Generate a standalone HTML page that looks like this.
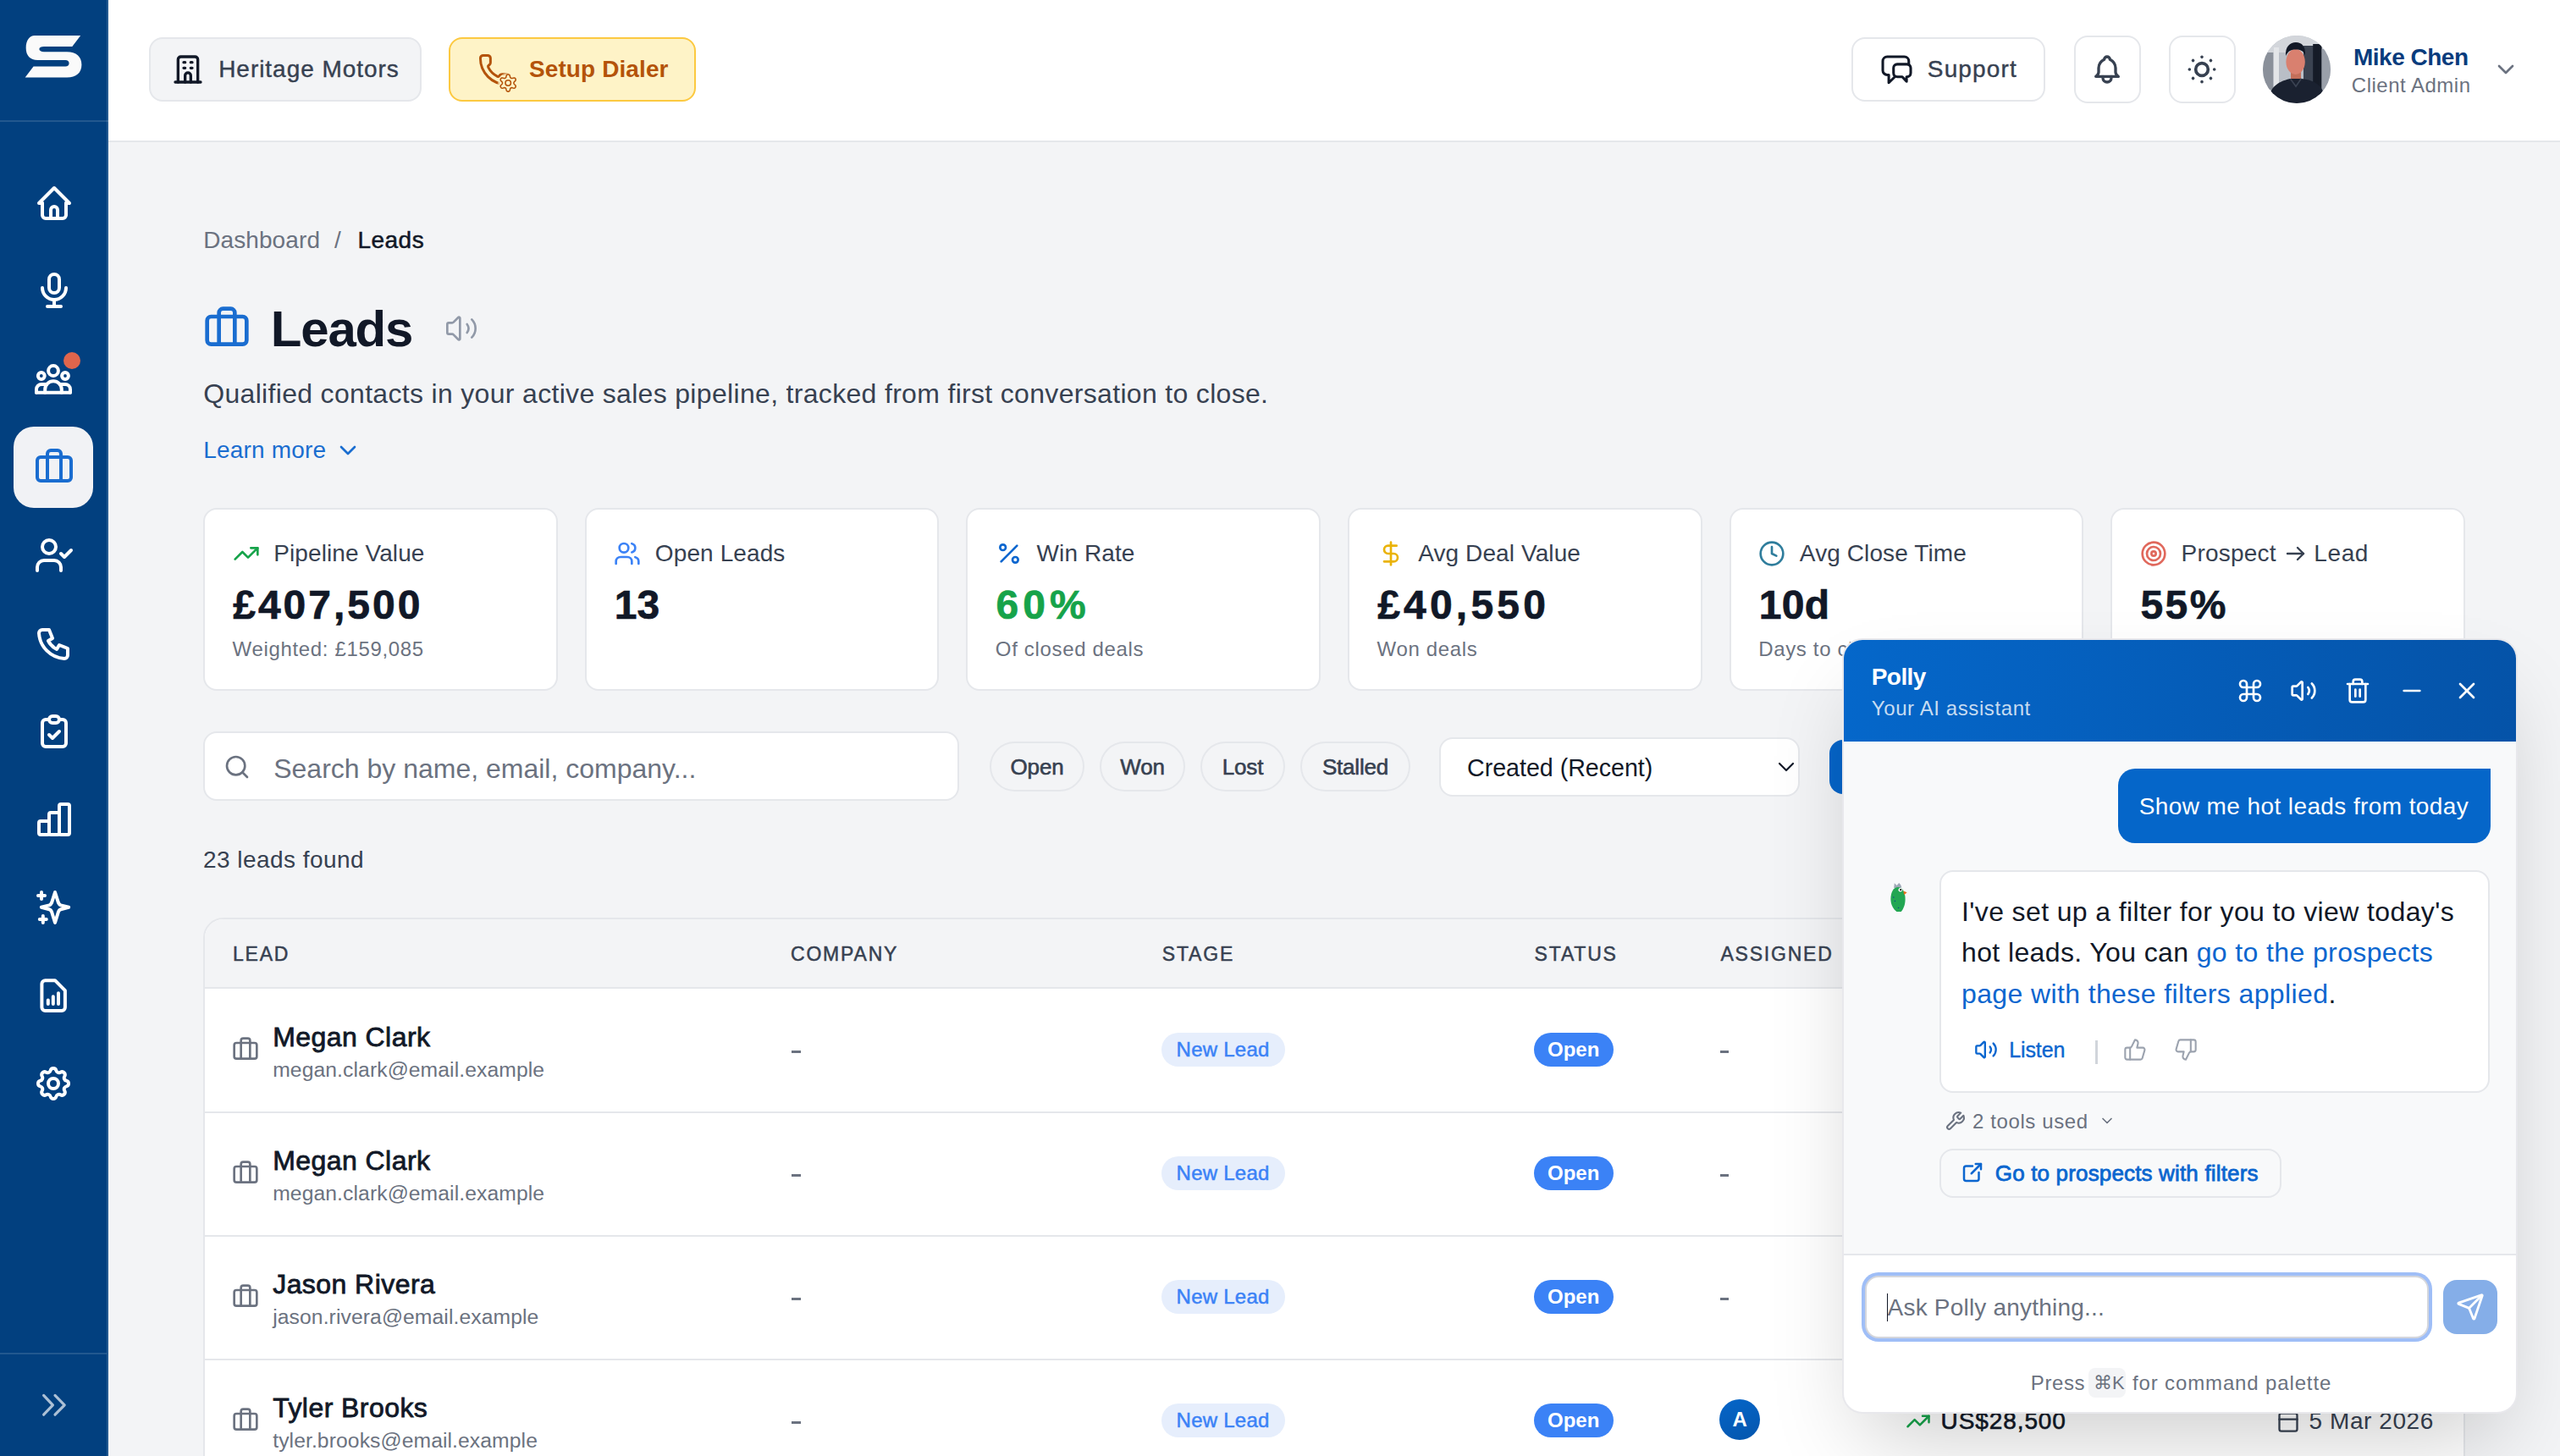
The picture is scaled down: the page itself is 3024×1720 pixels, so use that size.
<!DOCTYPE html>
<html><head><meta charset="utf-8"><title>Leads</title>
<style>
html,body{margin:0;padding:0;}
body{width:1512px;height:860px;overflow:hidden;position:relative;font-family:"Liberation Sans",sans-serif;background:#f3f4f6;}
@media (min-width:2200px){body{zoom:2;}}
.t{position:absolute;white-space:nowrap;}
.b{position:absolute;}
.ic{position:absolute;overflow:visible;}
</style></head><body>
<div class="b" style="left:0.00px;top:0.00px;width:64.00px;height:860.00px;background:#02407f;"></div>
<div class="b" style="left:63.20px;top:0.00px;width:0.60px;height:860.00px;background:rgba(255,255,255,0.14);"></div>
<div class="b" style="left:0.00px;top:71.00px;width:64.00px;height:1.00px;background:rgba(255,255,255,0.13);"></div>
<div class="b" style="left:0.00px;top:798.90px;width:63.20px;height:1.00px;background:rgba(255,255,255,0.13);"></div>
<svg class="ic" style="left:14px;top:20px;width:36px;height:27px" viewBox="0 0 36 27"><path fill="#fafafa" d="M6.4 1.01H33.6L28.65 7.5H11.96C10.3 7.5 9.18 8 9.18 9.05C9.18 10.1 10.3 10.6 11.96 10.6H25.56C31 10.6 34.2 13.5 34.2 18.2C34.2 22.9 31 25.74 25.56 25.74H0.83L5.78 19.25H24.6C26 19.25 26.8 18.6 26.8 17.4C26.8 16.2 26 15.54 24.6 15.54H8.25C3.8 15.54 1.33 12.9 1.33 8.3C1.33 3.8 3.5 1.01 6.4 1.01Z"/></svg>
<svg class="ic" style="left:20.00px;top:108.00px;width:24px;height:24px;" viewBox="0 0 24 24" fill="none" stroke="#ffffff" stroke-width="2" stroke-linecap="round" stroke-linejoin="round"><path d="M5 12H3l9-9 9 9h-2"/><path d="M5 12v7a2 2 0 0 0 2 2h10a2 2 0 0 0 2-2v-7"/><path d="M10 21v-5a2 2 0 0 1 4 0v5"/></svg>
<svg class="ic" style="left:20.00px;top:160.00px;width:24px;height:24px;" viewBox="0 0 24 24" fill="none" stroke="#ffffff" stroke-width="2" stroke-linecap="round" stroke-linejoin="round"><path d="M9 5a3 3 0 0 1 6 0v5a3 3 0 0 1-6 0z"/><path d="M5 10a7 7 0 0 0 14 0"/><path d="M8 21h8"/><path d="M12 17v4"/></svg>
<svg class="ic" style="left:20.00px;top:212.00px;width:24px;height:24px;" viewBox="0 0 24 24" fill="none" stroke="#ffffff" stroke-width="2" stroke-linecap="round" stroke-linejoin="round"><circle cx="11.5" cy="7" r="2.95"/><circle cx="4.4" cy="10" r="1.95"/><circle cx="18.5" cy="10" r="1.95"/><path d="M1.5 19.9H21.5"/><path d="M6.6 19.9V18A4.9 4.9 0 0 1 16.4 18V19.9"/><path d="M1.5 19.9V18A3 3 0 0 1 4.5 15H7.6"/><path d="M21.5 19.9V18A3 3 0 0 0 18.5 15H15.4"/></svg>
<div class="b" style="left:8.00px;top:252.00px;width:47.00px;height:48.00px;background:#f1f2f5;border-radius:12px;"></div>
<svg class="ic" style="left:20.00px;top:264.00px;width:24px;height:24px;" viewBox="0 0 24 24" fill="none" stroke="#1a6dd0" stroke-width="2" stroke-linecap="round" stroke-linejoin="round"><path d="M16 20V4a2 2 0 0 0-2-2h-4a2 2 0 0 0-2 2v16"/><rect width="20" height="14" x="2" y="6" rx="2"/></svg>
<svg class="ic" style="left:20.00px;top:316.00px;width:24px;height:24px;" viewBox="0 0 24 24" fill="none" stroke="#ffffff" stroke-width="2" stroke-linecap="round" stroke-linejoin="round"><path d="m16 11 2 2 4-4"/><path d="M16 21v-2a4 4 0 0 0-4-4H6a4 4 0 0 0-4 4v2"/><circle cx="9" cy="7" r="4"/></svg>
<svg class="ic" style="left:20.00px;top:368.00px;width:24px;height:24px;" viewBox="0 0 24 24" fill="none" stroke="#ffffff" stroke-width="2" stroke-linecap="round" stroke-linejoin="round"><path d="M5 4h4l2 5-2.5 1.5a11 11 0 0 0 5 5L15 13l5 2v4a2 2 0 0 1-2 2A16 16 0 0 1 3 6a2 2 0 0 1 2-2"/></svg>
<svg class="ic" style="left:20.00px;top:420.00px;width:24px;height:24px;" viewBox="0 0 24 24" fill="none" stroke="#ffffff" stroke-width="2" stroke-linecap="round" stroke-linejoin="round"><path d="M9 5H7a2 2 0 0 0-2 2v12a2 2 0 0 0 2 2h10a2 2 0 0 0 2-2V7a2 2 0 0 0-2-2h-2"/><rect x="9" y="3" width="6" height="4" rx="2"/><path d="m9 14 2 2 4-4"/></svg>
<svg class="ic" style="left:20.00px;top:472.00px;width:24px;height:24px;" viewBox="0 0 24 24" fill="none" stroke="#ffffff" stroke-width="2" stroke-linecap="round" stroke-linejoin="round"><rect x="3" y="13" width="6" height="8" rx="1"/><rect x="9" y="8" width="6" height="13" rx="1"/><rect x="15" y="3" width="6" height="18" rx="1"/></svg>
<svg class="ic" style="left:20.00px;top:524.00px;width:24px;height:24px;" viewBox="0 0 24 24" fill="none" stroke="#ffffff" stroke-width="2" stroke-linecap="round" stroke-linejoin="round"><path d="M12.5 3L14.5 9.3Q14.9 10.3 15.9 10.7L20.6 11.9L15.9 13.1Q14.9 13.5 14.5 14.5L12.5 21L10.5 14.5Q10.1 13.5 9.1 13.1L4.4 11.9L9.1 10.7Q10.1 10.3 10.5 9.3Z"/><path d="M4.5 3v4M2.5 5h4"/><path d="M5.4 17v4M3.4 19h4"/></svg>
<svg class="ic" style="left:20.00px;top:576.00px;width:24px;height:24px;" viewBox="0 0 24 24" fill="none" stroke="#ffffff" stroke-width="2" stroke-linecap="round" stroke-linejoin="round"><path d="M4.7 5.1a2 2 0 0 1 2-2H12.5L18.45 9.1V19a2 2 0 0 1-2 2H6.7a2 2 0 0 1-2-2z"/><path d="M8.4 17v-2.3M11.4 17v-4.4M14.5 17v-6.4"/></svg>
<svg class="ic" style="left:19.40px;top:628.00px;width:24px;height:24px;" viewBox="0 0 24 24" fill="none" stroke="#ffffff" stroke-width="2" stroke-linecap="round" stroke-linejoin="round"><path d="M10.325 4.317c.426-1.756 2.924-1.756 3.35 0a1.724 1.724 0 0 0 2.573 1.066c1.543-.94 3.31.826 2.37 2.37a1.724 1.724 0 0 0 1.065 2.572c1.756.426 1.756 2.924 0 3.35a1.724 1.724 0 0 0-1.066 2.573c.94 1.543-.826 3.31-2.37 2.37a1.724 1.724 0 0 0-2.572 1.065c-.426 1.756-2.924 1.756-3.35 0a1.724 1.724 0 0 0-2.573-1.066c-1.543.94-3.31-.826-2.37-2.37a1.724 1.724 0 0 0-1.065-2.572c-1.756-.426-1.756-2.924 0-3.35a1.724 1.724 0 0 0 1.066-2.573c-.94-1.543.826-3.31 2.37-2.37 1 .608 2.296.07 2.572-1.065z"/><circle cx="12" cy="12" r="3"/></svg>
<div class="b" style="left:37.40px;top:207.80px;width:10.00px;height:10.00px;background:#e0654c;border-radius:50%;"></div>
<svg class="ic" style="left:19.50px;top:818.00px;width:24px;height:24px;" viewBox="0 0 24 24" fill="none" stroke="rgba(230,235,242,0.75)" stroke-width="1.6" stroke-linecap="round" stroke-linejoin="round"><path d="M6.3 6.2l5.4 5.7-5.4 5.7"/><path d="M13 6.2l5.6 5.7-5.6 5.7"/></svg>
<div class="b" style="left:64.00px;top:0.00px;width:1448.00px;height:83.00px;background:#ffffff;"></div>
<div class="b" style="left:64.00px;top:83.00px;width:1448.00px;height:1.00px;background:#e5e7eb;"></div>
<div class="b" style="left:88.00px;top:22.00px;width:161.00px;height:38.00px;background:#f3f4f6;border:1px solid #e5e7eb;border-radius:8px;box-sizing:border-box;"></div>
<svg class="ic" style="left:101.10px;top:31.00px;width:20px;height:20px;" viewBox="0 0 24 24" fill="none" stroke="#111827" stroke-width="2" stroke-linecap="round" stroke-linejoin="round"><path d="M3 21h18"/><path d="M5 21V5a2 2 0 0 1 2-2h10a2 2 0 0 1 2 2v16"/><path d="M9 7h1M14 7h1M9 11h1M14 11h1"/><path d="M10 21v-4.7a2 2 0 0 1 4 0v4.7"/></svg>
<div class="t" style="left:129.10px;top:34.15px;font-size:14px;line-height:14px;color:#374151;font-weight:400;letter-spacing:0.48px;-webkit-text-stroke:0.2px #374151;">Heritage Motors</div>
<div class="b" style="left:265.00px;top:22.00px;width:146.00px;height:38.00px;background:#fef3c7;border:1px solid #fcc940;border-radius:8px;box-sizing:border-box;"></div>
<svg class="ic" style="left:281.9px;top:31px;width:20.5px;height:20.5px" viewBox="0 0 24 24" fill="none" stroke="#b4530b" stroke-linecap="round" stroke-linejoin="round"><defs><mask id="pm"><rect x="-5" y="-5" width="40" height="40" fill="#fff"/><circle cx="21.2" cy="21.1" r="6.6" fill="#000"/></mask></defs><path mask="url(#pm)" stroke-width="1.75" d="M13.832 16.568a1 1 0 0 0 1.213-.303l.355-.465A2 2 0 0 1 17 15h3a2 2 0 0 1 2 2v3a2 2 0 0 1-2 2A18 18 0 0 1 2 4a2 2 0 0 1 2-2h3a2 2 0 0 1 2 2v3a2 2 0 0 1-.8 1.6l-.468.351a1 1 0 0 0-.292 1.233 14 14 0 0 0 6.392 6.384"/><path stroke-width="0.9" d="M25.10 21.10 L25.14 21.36 L25.25 21.63 L25.45 21.95 L25.93 22.37 L26.37 22.86 L26.48 23.29 L26.45 23.69 L26.31 24.05 L26.07 24.35 L25.73 24.58 L25.31 24.70 L24.66 24.56 L24.06 24.36 L23.69 24.34 L23.39 24.38 L23.15 24.48 L22.95 24.64 L22.76 24.88 L22.59 25.21 L22.47 25.83 L22.27 26.46 L21.95 26.76 L21.58 26.94 L21.20 27.00 L20.82 26.94 L20.45 26.76 L20.13 26.46 L19.93 25.83 L19.81 25.21 L19.64 24.88 L19.45 24.64 L19.25 24.48 L19.01 24.38 L18.71 24.34 L18.34 24.36 L17.74 24.56 L17.09 24.70 L16.67 24.58 L16.33 24.35 L16.09 24.05 L15.95 23.69 L15.92 23.29 L16.03 22.86 L16.47 22.37 L16.95 21.95 L17.15 21.63 L17.26 21.36 L17.30 21.10 L17.26 20.84 L17.15 20.57 L16.95 20.25 L16.47 19.83 L16.03 19.34 L15.92 18.91 L15.95 18.51 L16.09 18.15 L16.33 17.85 L16.67 17.62 L17.09 17.50 L17.74 17.64 L18.34 17.84 L18.71 17.86 L19.01 17.82 L19.25 17.72 L19.45 17.56 L19.64 17.32 L19.81 16.99 L19.93 16.37 L20.13 15.74 L20.45 15.44 L20.82 15.26 L21.20 15.20 L21.58 15.26 L21.95 15.44 L22.27 15.74 L22.47 16.37 L22.59 16.99 L22.76 17.32 L22.95 17.56 L23.15 17.72 L23.39 17.82 L23.69 17.86 L24.06 17.84 L24.66 17.64 L25.31 17.50 L25.73 17.62 L26.07 17.85 L26.31 18.15 L26.45 18.51 L26.48 18.91 L26.37 19.34 L25.93 19.83 L25.45 20.25 L25.25 20.57 L25.14 20.84Z"/><circle cx="21.2" cy="21.1" r="1.9" stroke-width="0.9"/></svg>
<div class="t" style="left:312.50px;top:34.15px;font-size:14px;line-height:14px;color:#b45309;font-weight:700;letter-spacing:0.05px;">Setup Dialer</div>
<div class="b" style="left:1093.50px;top:22.00px;width:114.50px;height:38.00px;background:#fff;border:1px solid #e5e7eb;border-radius:8px;box-sizing:border-box;"></div>
<svg class="ic" style="left:1108.80px;top:30.50px;width:21px;height:21px;" viewBox="0 0 24 24" fill="none" stroke="#111827" stroke-width="1.75" stroke-linecap="round" stroke-linejoin="round"><path d="M21 8.5V6.45A3 3 0 0 0 18 3.45H6.45A3 3 0 0 0 3.45 6.45V12.7A3 3 0 0 0 6.45 15.7H7.5V21L11.3 17.3"/><path d="M13.2 8.5H19.8A2.5 2.5 0 0 1 22.3 11V14.45A2.5 2.5 0 0 1 19.8 16.95H19.5V20.1L16.6 16.95H13.2A2.5 2.5 0 0 1 10.7 14.45V11A2.5 2.5 0 0 1 13.2 8.5Z"/></svg>
<div class="t" style="left:1138.40px;top:34.15px;font-size:14px;line-height:14px;color:#374151;font-weight:400;letter-spacing:0.58px;-webkit-text-stroke:0.2px #374151;">Support</div>
<div class="b" style="left:1224.80px;top:21.00px;width:39.50px;height:40.00px;background:#fff;border:1px solid #e5e7eb;border-radius:8px;box-sizing:border-box;"></div>
<svg class="ic" style="left:1234.50px;top:31.00px;width:20px;height:20px;" viewBox="0 0 24 24" fill="none" stroke="#374151" stroke-width="2" stroke-linecap="round" stroke-linejoin="round"><path d="M10 5a2 2 0 1 1 4 0a7 7 0 0 1 4 6v3a4 4 0 0 0 2 3H4a4 4 0 0 0 2-3v-3a7 7 0 0 1 4-6"/><path d="M9 17v1a3 3 0 0 0 6 0v-1"/></svg>
<div class="b" style="left:1280.80px;top:21.00px;width:39.50px;height:40.00px;background:#fff;border:1px solid #e5e7eb;border-radius:8px;box-sizing:border-box;"></div>
<svg class="ic" style="left:1289.50px;top:30.00px;width:22px;height:22px;" viewBox="0 0 24 24" fill="none" stroke="#374151" stroke-width="2" stroke-linecap="round" stroke-linejoin="round"><circle cx="12" cy="12" r="4"/><path d="M4 12h.01M12 4v.01M20 12h.01M12 20v.01M6.31 6.31l-.01-.01M17.71 6.31l-.01-.01M17.7 17.7l.01.01M6.3 17.7l.01.01"/></svg>
<svg class="ic" style="left:1336.5px;top:21px;width:40px;height:40px" viewBox="0 0 40 40"><defs><clipPath id="av"><circle cx="20" cy="20" r="20"/></clipPath></defs><g clip-path="url(#av)"><rect width="40" height="40" fill="#b9bec6"/><rect width="40" height="10" fill="#d3d6db"/><rect x="0" y="10" width="6" height="22" fill="#8a909a"/><rect x="6.5" y="7" width="3" height="25" fill="#e3e5e8"/><rect x="24" y="6" width="6" height="26" fill="#3b4351"/><rect x="29.6" y="5" width="5.2" height="30" fill="#151b27"/><rect x="34.8" y="8" width="5.2" height="26" fill="#9aa0aa"/><rect x="16.5" y="20" width="6" height="6" fill="#c46f5a"/><ellipse cx="19.3" cy="15.5" rx="5.6" ry="7.5" fill="#d9806f"/><path d="M13.5 12C13.2 6.5 16 4 19.5 4C23 4 25.4 6.5 25 11.5C24 9 22 8.2 19.5 8.2C17 8.2 14.8 9 13.5 12Z" fill="#121826"/><path d="M3 40C3.5 31 8 27.5 16 25.5H23C31 26.5 36.5 29.5 37 40Z" fill="#1a2130"/><path d="M16.3 25.6 19.5 30 22.7 25.4" stroke="#3a4252" stroke-width="0.8" fill="none"/></g></svg>
<div class="t" style="left:1390.00px;top:27.15px;font-size:14px;line-height:14px;color:#093c7d;font-weight:700;letter-spacing:-0.25px;">Mike Chen</div>
<div class="t" style="left:1388.90px;top:44.34px;font-size:12px;line-height:12px;color:#6b7280;font-weight:400;letter-spacing:0.25px;">Client Admin</div>
<svg class="ic" style="left:1472.00px;top:33.00px;width:16px;height:16px;" viewBox="0 0 24 24" fill="none" stroke="#6b7280" stroke-width="2" stroke-linecap="round" stroke-linejoin="round"><path d="m6 9 6 6 6-6"/></svg>
<div class="b" style="left:64.00px;top:84.00px;width:1448.00px;height:776.00px;background:#f3f4f6;"></div>
<div class="t" style="left:120.10px;top:135.15px;font-size:14px;line-height:14px;color:#6b7280;font-weight:400;letter-spacing:0.05px;">Dashboard</div>
<div class="t" style="left:197.50px;top:135.15px;font-size:14px;line-height:14px;color:#6b7280;font-weight:400;letter-spacing:0px;">/</div>
<div class="t" style="left:211.20px;top:135.15px;font-size:14px;line-height:14px;color:#111827;font-weight:400;letter-spacing:0.25px;-webkit-text-stroke:0.25px #111827;">Leads</div>
<svg class="ic" style="left:120.00px;top:180.20px;width:28px;height:28px;" viewBox="0 0 24 24" fill="none" stroke="#1a6dd0" stroke-width="2" stroke-linecap="round" stroke-linejoin="round"><path d="M16 20V4a2 2 0 0 0-2-2h-4a2 2 0 0 0-2 2v16"/><rect width="20" height="14" x="2" y="6" rx="2"/></svg>
<div class="t" style="left:159.90px;top:179.60px;font-size:30px;line-height:30px;color:#111827;font-weight:700;letter-spacing:-0.6px;">Leads</div>
<svg class="ic" style="left:262.70px;top:183.90px;width:20px;height:20px;" viewBox="0 0 24 24" fill="none" stroke="#9199a8" stroke-width="1.6" stroke-linecap="round" stroke-linejoin="round"><path d="M11 4.702a.705.705 0 0 0-1.203-.498L6.413 7.587A1.4 1.4 0 0 1 5.416 8H3a1 1 0 0 0-1 1v6a1 1 0 0 0 1 1h2.416a1.4 1.4 0 0 1 .997.413l3.383 3.384A.705.705 0 0 0 11 19.298z"/><path d="M16 9a5 5 0 0 1 0 6"/><path d="M19.364 18.364a9 9 0 0 0 0-12.728"/></svg>
<div class="t" style="left:120.10px;top:224.26px;font-size:16px;line-height:16px;color:#374151;font-weight:400;letter-spacing:0.16px;">Qualified contacts in your active sales pipeline, tracked from first conversation to close.</div>
<div class="t" style="left:120.10px;top:259.15px;font-size:14px;line-height:14px;color:#1a6dd0;font-weight:400;letter-spacing:0.1px;">Learn more</div>
<svg class="ic" style="left:197.30px;top:258.00px;width:16px;height:16px;" viewBox="0 0 24 24" fill="none" stroke="#1a6dd0" stroke-width="2" stroke-linecap="round" stroke-linejoin="round"><path d="m6 9 6 6 6-6"/></svg>
<div class="b" style="left:120.00px;top:300.00px;width:209.33px;height:108.00px;background:#fff;border:1px solid #e5e7eb;border-radius:8px;box-sizing:border-box;"></div>
<svg class="ic" style="left:137.25px;top:319.00px;width:16px;height:16px;" viewBox="0 0 24 24" fill="none" stroke="#16a34a" stroke-width="2" stroke-linecap="round" stroke-linejoin="round"><polyline points="22 7 13.5 15.5 8.5 10.5 2 17"/><polyline points="16 7 22 7 22 13"/></svg>
<div class="t" style="left:161.60px;top:320.15px;font-size:14px;line-height:14px;color:#374151;font-weight:400;letter-spacing:0.05px;">Pipeline Value</div>
<div class="t" style="left:137.60px;top:345.68px;font-size:24px;line-height:24px;color:#111827;font-weight:700;letter-spacing:1.5px;-webkit-text-stroke:0.35px #111827;">£407,500</div>
<div class="t" style="left:137.25px;top:377.54px;font-size:12px;line-height:12px;color:#6b7280;font-weight:400;letter-spacing:0.33px;">Weighted: £159,085</div>
<div class="b" style="left:345.33px;top:300.00px;width:209.33px;height:108.00px;background:#fff;border:1px solid #e5e7eb;border-radius:8px;box-sizing:border-box;"></div>
<svg class="ic" style="left:362.58px;top:319.00px;width:16px;height:16px;" viewBox="0 0 24 24" fill="none" stroke="#3b82f6" stroke-width="2" stroke-linecap="round" stroke-linejoin="round"><path d="M16 21v-2a4 4 0 0 0-4-4H6a4 4 0 0 0-4 4v2"/><circle cx="9" cy="7" r="4"/><path d="M22 21v-2a4 4 0 0 0-3-3.87"/><path d="M16 3.13a4 4 0 0 1 0 7.75"/></svg>
<div class="t" style="left:386.93px;top:320.15px;font-size:14px;line-height:14px;color:#374151;font-weight:400;letter-spacing:0.05px;">Open Leads</div>
<div class="t" style="left:362.93px;top:345.68px;font-size:24px;line-height:24px;color:#111827;font-weight:700;letter-spacing:0px;-webkit-text-stroke:0.35px #111827;">13</div>
<div class="b" style="left:570.67px;top:300.00px;width:209.33px;height:108.00px;background:#fff;border:1px solid #e5e7eb;border-radius:8px;box-sizing:border-box;"></div>
<svg class="ic" style="left:587.92px;top:319.00px;width:16px;height:16px;" viewBox="0 0 24 24" fill="none" stroke="#0b66cf" stroke-width="2" stroke-linecap="round" stroke-linejoin="round"><line x1="19" x2="5" y1="5" y2="19"/><circle cx="6.5" cy="6.5" r="2.5"/><circle cx="17.5" cy="17.5" r="2.5"/></svg>
<div class="t" style="left:612.27px;top:320.15px;font-size:14px;line-height:14px;color:#374151;font-weight:400;letter-spacing:0.05px;">Win Rate</div>
<div class="t" style="left:588.27px;top:345.68px;font-size:24px;line-height:24px;color:#16a34a;font-weight:700;letter-spacing:2.5px;-webkit-text-stroke:0.35px #16a34a;">60%</div>
<div class="t" style="left:587.92px;top:377.54px;font-size:12px;line-height:12px;color:#6b7280;font-weight:400;letter-spacing:0.33px;">Of closed deals</div>
<div class="b" style="left:796.00px;top:300.00px;width:209.33px;height:108.00px;background:#fff;border:1px solid #e5e7eb;border-radius:8px;box-sizing:border-box;"></div>
<svg class="ic" style="left:813.25px;top:319.00px;width:16px;height:16px;" viewBox="0 0 24 24" fill="none" stroke="#eab308" stroke-width="2" stroke-linecap="round" stroke-linejoin="round"><line x1="12" x2="12" y1="2" y2="22"/><path d="M17 5H9.5a3.5 3.5 0 0 0 0 7h5a3.5 3.5 0 0 1 0 7H6"/></svg>
<div class="t" style="left:837.60px;top:320.15px;font-size:14px;line-height:14px;color:#374151;font-weight:400;letter-spacing:0.05px;">Avg Deal Value</div>
<div class="t" style="left:813.60px;top:345.68px;font-size:24px;line-height:24px;color:#111827;font-weight:700;letter-spacing:2.1px;-webkit-text-stroke:0.35px #111827;">£40,550</div>
<div class="t" style="left:813.25px;top:377.54px;font-size:12px;line-height:12px;color:#6b7280;font-weight:400;letter-spacing:0.33px;">Won deals</div>
<div class="b" style="left:1021.33px;top:300.00px;width:209.33px;height:108.00px;background:#fff;border:1px solid #e5e7eb;border-radius:8px;box-sizing:border-box;"></div>
<svg class="ic" style="left:1038.58px;top:319.00px;width:16px;height:16px;" viewBox="0 0 24 24" fill="none" stroke="#2f7d9c" stroke-width="2" stroke-linecap="round" stroke-linejoin="round"><circle cx="12" cy="12" r="10"/><polyline points="12 6 12 12 16 14"/></svg>
<div class="t" style="left:1062.93px;top:320.15px;font-size:14px;line-height:14px;color:#374151;font-weight:400;letter-spacing:0.05px;">Avg Close Time</div>
<div class="t" style="left:1038.93px;top:345.68px;font-size:24px;line-height:24px;color:#111827;font-weight:700;letter-spacing:0.15px;-webkit-text-stroke:0.35px #111827;">10d</div>
<div class="t" style="left:1038.58px;top:377.54px;font-size:12px;line-height:12px;color:#6b7280;font-weight:400;letter-spacing:0.33px;">Days to close</div>
<div class="b" style="left:1246.66px;top:300.00px;width:209.33px;height:108.00px;background:#fff;border:1px solid #e5e7eb;border-radius:8px;box-sizing:border-box;"></div>
<svg class="ic" style="left:1263.91px;top:319.00px;width:16px;height:16px;" viewBox="0 0 24 24" fill="none" stroke="#e0685c" stroke-width="2" stroke-linecap="round" stroke-linejoin="round"><circle cx="12" cy="12" r="10"/><circle cx="12" cy="12" r="6"/><circle cx="12" cy="12" r="2"/></svg>
<div class="t" style="left:1288.26px;top:320.15px;font-size:14px;line-height:14px;color:#374151;font-weight:400;letter-spacing:0.1px;">Prospect</div>
<svg class="ic" style="left:1349.87px;top:321.00px;width:12px;height:12px;" viewBox="0 0 24 24" fill="none" stroke="#374151" stroke-width="2.4" stroke-linecap="round" stroke-linejoin="round"><path d="M2 12h19"/><path d="m14 5 7 7-7 7"/></svg>
<div class="t" style="left:1366.66px;top:320.15px;font-size:14px;line-height:14px;color:#374151;font-weight:400;letter-spacing:0.3px;">Lead</div>
<div class="t" style="left:1264.26px;top:345.68px;font-size:24px;line-height:24px;color:#111827;font-weight:700;letter-spacing:1.2px;-webkit-text-stroke:0.35px #111827;">55%</div>
<div class="t" style="left:1263.91px;top:377.54px;font-size:12px;line-height:12px;color:#6b7280;font-weight:400;letter-spacing:0.33px;">Of prospects converted</div>
<div class="b" style="left:120.00px;top:432.20px;width:446.60px;height:40.80px;background:#fff;border:1px solid #e5e7eb;border-radius:8px;box-sizing:border-box;"></div>
<svg class="ic" style="left:132.00px;top:445.00px;width:16px;height:16px;" viewBox="0 0 24 24" fill="none" stroke="#6b7280" stroke-width="2" stroke-linecap="round" stroke-linejoin="round"><circle cx="11" cy="11" r="8"/><path d="m21 21-4.3-4.3"/></svg>
<div class="t" style="left:161.60px;top:445.76px;font-size:16px;line-height:16px;color:#6b7280;font-weight:400;letter-spacing:0px;">Search by name, email, company...</div>
<div class="b" style="left:584.50px;top:437.90px;width:56.00px;height:29.80px;border:1px solid #e5e7eb;border-radius:999px;box-sizing:border-box;"></div>
<div class="t" style="left:612.50px;top:446.30px;font-size:13px;line-height:13px;color:#374151;font-weight:400;letter-spacing:-0.1px;transform:translateX(-50%);-webkit-text-stroke:0.3px #374151;">Open</div>
<div class="b" style="left:649.50px;top:437.90px;width:50.50px;height:29.80px;border:1px solid #e5e7eb;border-radius:999px;box-sizing:border-box;"></div>
<div class="t" style="left:674.75px;top:446.30px;font-size:13px;line-height:13px;color:#374151;font-weight:400;letter-spacing:-0.1px;transform:translateX(-50%);-webkit-text-stroke:0.3px #374151;">Won</div>
<div class="b" style="left:709.00px;top:437.90px;width:50.00px;height:29.80px;border:1px solid #e5e7eb;border-radius:999px;box-sizing:border-box;"></div>
<div class="t" style="left:734.00px;top:446.30px;font-size:13px;line-height:13px;color:#374151;font-weight:400;letter-spacing:-0.1px;transform:translateX(-50%);-webkit-text-stroke:0.3px #374151;">Lost</div>
<div class="b" style="left:768.00px;top:437.90px;width:65.00px;height:29.80px;border:1px solid #e5e7eb;border-radius:999px;box-sizing:border-box;"></div>
<div class="t" style="left:800.50px;top:446.30px;font-size:13px;line-height:13px;color:#374151;font-weight:400;letter-spacing:-0.1px;transform:translateX(-50%);-webkit-text-stroke:0.3px #374151;">Stalled</div>
<div class="b" style="left:850.00px;top:435.40px;width:213.00px;height:35.30px;background:#fff;border:1px solid #e5e7eb;border-radius:8px;box-sizing:border-box;"></div>
<div class="t" style="left:866.50px;top:446.30px;font-size:14.3px;line-height:14.3px;color:#111827;font-weight:400;letter-spacing:0px;">Created (Recent)</div>
<svg class="ic" style="left:1047.20px;top:445.00px;width:16px;height:16px;" viewBox="0 0 24 24" fill="none" stroke="#111827" stroke-width="1.6" stroke-linecap="round" stroke-linejoin="round"><path d="m6 9 6 6 6-6"/></svg>
<div class="b" style="left:1080.40px;top:436.90px;width:60.00px;height:32.10px;background:#0565c9;border-radius:8px;"></div>
<div class="t" style="left:120.00px;top:501.15px;font-size:14px;line-height:14px;color:#374151;font-weight:400;letter-spacing:0.23px;">23 leads found</div>
<div class="b" style="left:120.00px;top:542.20px;width:1336.00px;height:400.00px;background:#fff;border:1px solid #e5e7eb;border-radius:12px;box-sizing:border-box;overflow:hidden;"></div>
<div class="b" style="left:121.00px;top:543.20px;width:1334.00px;height:39.60px;background:#f3f4f6;border-radius:11px 11px 0 0;"></div>
<div class="b" style="left:121.00px;top:582.80px;width:1334.00px;height:1.00px;background:#e5e7eb;"></div>
<div class="t" style="left:137.50px;top:557.77px;font-size:11.5px;line-height:11.5px;color:#374151;font-weight:400;letter-spacing:0.9px;-webkit-text-stroke:0.25px #374151;">LEAD</div>
<div class="t" style="left:467.00px;top:557.77px;font-size:11.5px;line-height:11.5px;color:#374151;font-weight:400;letter-spacing:0.9px;-webkit-text-stroke:0.25px #374151;">COMPANY</div>
<div class="t" style="left:686.40px;top:557.77px;font-size:11.5px;line-height:11.5px;color:#374151;font-weight:400;letter-spacing:0.9px;-webkit-text-stroke:0.25px #374151;">STAGE</div>
<div class="t" style="left:906.30px;top:557.77px;font-size:11.5px;line-height:11.5px;color:#374151;font-weight:400;letter-spacing:0.9px;-webkit-text-stroke:0.25px #374151;">STATUS</div>
<div class="t" style="left:1016.20px;top:557.77px;font-size:11.5px;line-height:11.5px;color:#374151;font-weight:400;letter-spacing:0.9px;-webkit-text-stroke:0.25px #374151;">ASSIGNED</div>
<div class="t" style="left:1126.30px;top:557.77px;font-size:11.5px;line-height:11.5px;color:#374151;font-weight:400;letter-spacing:0.9px;-webkit-text-stroke:0.25px #374151;">VALUE</div>
<div class="t" style="left:1346.00px;top:557.77px;font-size:11.5px;line-height:11.5px;color:#374151;font-weight:400;letter-spacing:0.9px;-webkit-text-stroke:0.25px #374151;">CREATED</div>
<svg class="ic" style="left:137.10px;top:611.90px;width:16px;height:16px;" viewBox="0 0 24 24" fill="none" stroke="#6b7280" stroke-width="2" stroke-linecap="round" stroke-linejoin="round"><path d="M16 20V4a2 2 0 0 0-2-2h-4a2 2 0 0 0-2 2v16"/><rect width="20" height="14" x="2" y="6" rx="2"/></svg>
<div class="t" style="left:161.10px;top:604.46px;font-size:16px;line-height:16px;color:#111827;font-weight:400;letter-spacing:0.22px;-webkit-text-stroke:0.4px #111827;">Megan Clark</div>
<div class="t" style="left:161.10px;top:626.15px;font-size:12.35px;line-height:12.35px;color:#6b7280;font-weight:400;letter-spacing:0.045px;">megan.clark@email.example</div>
<div class="b" style="left:467.60px;top:620.55px;width:5.30px;height:1.40px;background:#6b7280;"></div>
<div class="b" style="left:686.00px;top:609.80px;width:73.00px;height:20.00px;background:#e6eefc;border-radius:999px;"></div>
<div class="t" style="left:694.80px;top:614.04px;font-size:12px;line-height:12px;color:#3b82f6;font-weight:400;letter-spacing:0.12px;-webkit-text-stroke:0.25px #3b82f6;">New Lead</div>
<div class="b" style="left:905.80px;top:609.80px;width:47.00px;height:20.00px;background:#3b82f6;border-radius:999px;"></div>
<div class="t" style="left:914.00px;top:614.04px;font-size:12px;line-height:12px;color:#ffffff;font-weight:700;letter-spacing:0px;">Open</div>
<div class="b" style="left:1016.20px;top:620.55px;width:5.00px;height:1.40px;background:#6b7280;"></div>
<div class="b" style="left:121.00px;top:656.40px;width:1334.00px;height:1.00px;background:#e5e7eb;"></div>
<svg class="ic" style="left:137.10px;top:684.90px;width:16px;height:16px;" viewBox="0 0 24 24" fill="none" stroke="#6b7280" stroke-width="2" stroke-linecap="round" stroke-linejoin="round"><path d="M16 20V4a2 2 0 0 0-2-2h-4a2 2 0 0 0-2 2v16"/><rect width="20" height="14" x="2" y="6" rx="2"/></svg>
<div class="t" style="left:161.10px;top:677.46px;font-size:16px;line-height:16px;color:#111827;font-weight:400;letter-spacing:0.22px;-webkit-text-stroke:0.4px #111827;">Megan Clark</div>
<div class="t" style="left:161.10px;top:699.15px;font-size:12.35px;line-height:12.35px;color:#6b7280;font-weight:400;letter-spacing:0.045px;">megan.clark@email.example</div>
<div class="b" style="left:467.60px;top:693.55px;width:5.30px;height:1.40px;background:#6b7280;"></div>
<div class="b" style="left:686.00px;top:682.80px;width:73.00px;height:20.00px;background:#e6eefc;border-radius:999px;"></div>
<div class="t" style="left:694.80px;top:687.04px;font-size:12px;line-height:12px;color:#3b82f6;font-weight:400;letter-spacing:0.12px;-webkit-text-stroke:0.25px #3b82f6;">New Lead</div>
<div class="b" style="left:905.80px;top:682.80px;width:47.00px;height:20.00px;background:#3b82f6;border-radius:999px;"></div>
<div class="t" style="left:914.00px;top:687.04px;font-size:12px;line-height:12px;color:#ffffff;font-weight:700;letter-spacing:0px;">Open</div>
<div class="b" style="left:1016.20px;top:693.55px;width:5.00px;height:1.40px;background:#6b7280;"></div>
<div class="b" style="left:121.00px;top:729.40px;width:1334.00px;height:1.00px;background:#e5e7eb;"></div>
<svg class="ic" style="left:137.10px;top:757.90px;width:16px;height:16px;" viewBox="0 0 24 24" fill="none" stroke="#6b7280" stroke-width="2" stroke-linecap="round" stroke-linejoin="round"><path d="M16 20V4a2 2 0 0 0-2-2h-4a2 2 0 0 0-2 2v16"/><rect width="20" height="14" x="2" y="6" rx="2"/></svg>
<div class="t" style="left:161.10px;top:750.46px;font-size:16px;line-height:16px;color:#111827;font-weight:400;letter-spacing:0.22px;-webkit-text-stroke:0.4px #111827;">Jason Rivera</div>
<div class="t" style="left:161.10px;top:772.15px;font-size:12.35px;line-height:12.35px;color:#6b7280;font-weight:400;letter-spacing:0.045px;">jason.rivera@email.example</div>
<div class="b" style="left:467.60px;top:766.55px;width:5.30px;height:1.40px;background:#6b7280;"></div>
<div class="b" style="left:686.00px;top:755.80px;width:73.00px;height:20.00px;background:#e6eefc;border-radius:999px;"></div>
<div class="t" style="left:694.80px;top:760.04px;font-size:12px;line-height:12px;color:#3b82f6;font-weight:400;letter-spacing:0.12px;-webkit-text-stroke:0.25px #3b82f6;">New Lead</div>
<div class="b" style="left:905.80px;top:755.80px;width:47.00px;height:20.00px;background:#3b82f6;border-radius:999px;"></div>
<div class="t" style="left:914.00px;top:760.04px;font-size:12px;line-height:12px;color:#ffffff;font-weight:700;letter-spacing:0px;">Open</div>
<div class="b" style="left:1016.20px;top:766.55px;width:5.00px;height:1.40px;background:#6b7280;"></div>
<div class="b" style="left:121.00px;top:802.40px;width:1334.00px;height:1.00px;background:#e5e7eb;"></div>
<svg class="ic" style="left:137.10px;top:830.90px;width:16px;height:16px;" viewBox="0 0 24 24" fill="none" stroke="#6b7280" stroke-width="2" stroke-linecap="round" stroke-linejoin="round"><path d="M16 20V4a2 2 0 0 0-2-2h-4a2 2 0 0 0-2 2v16"/><rect width="20" height="14" x="2" y="6" rx="2"/></svg>
<div class="t" style="left:161.10px;top:823.46px;font-size:16px;line-height:16px;color:#111827;font-weight:400;letter-spacing:0.22px;-webkit-text-stroke:0.4px #111827;">Tyler Brooks</div>
<div class="t" style="left:161.10px;top:845.15px;font-size:12.35px;line-height:12.35px;color:#6b7280;font-weight:400;letter-spacing:0.045px;">tyler.brooks@email.example</div>
<div class="b" style="left:467.60px;top:839.55px;width:5.30px;height:1.40px;background:#6b7280;"></div>
<div class="b" style="left:686.00px;top:828.80px;width:73.00px;height:20.00px;background:#e6eefc;border-radius:999px;"></div>
<div class="t" style="left:694.80px;top:833.04px;font-size:12px;line-height:12px;color:#3b82f6;font-weight:400;letter-spacing:0.12px;-webkit-text-stroke:0.25px #3b82f6;">New Lead</div>
<div class="b" style="left:905.80px;top:828.80px;width:47.00px;height:20.00px;background:#3b82f6;border-radius:999px;"></div>
<div class="t" style="left:914.00px;top:833.04px;font-size:12px;line-height:12px;color:#ffffff;font-weight:700;letter-spacing:0px;">Open</div>
<div class="b" style="left:1015.60px;top:826.60px;width:24.00px;height:24.00px;background:linear-gradient(160deg,#0565c8,#0556ad);border-radius:50%;"></div>
<div class="t" style="left:1027.60px;top:832.74px;font-size:12px;line-height:12px;color:#ffffff;font-weight:700;letter-spacing:0px;transform:translateX(-50%);">A</div>
<svg class="ic" style="left:1125.50px;top:831.90px;width:15px;height:15px;" viewBox="0 0 24 24" fill="none" stroke="#16a34a" stroke-width="2" stroke-linecap="round" stroke-linejoin="round"><polyline points="22 7 13.5 15.5 8.5 10.5 2 17"/><polyline points="16 7 22 7 22 13"/></svg>
<div class="t" style="left:1146.30px;top:832.55px;font-size:14px;line-height:14px;color:#111827;font-weight:400;letter-spacing:0.45px;-webkit-text-stroke:0.3px #111827;">US$28,500</div>
<svg class="ic" style="left:1344.50px;top:832.40px;width:14px;height:14px;" viewBox="0 0 24 24" fill="none" stroke="#374151" stroke-width="2" stroke-linecap="round" stroke-linejoin="round"><rect width="18" height="18" x="3" y="4" rx="2"/><path d="M3 10h18"/></svg>
<div class="t" style="left:1363.80px;top:832.55px;font-size:14px;line-height:14px;color:#374151;font-weight:400;letter-spacing:0.28px;">5 Mar 2026</div>
<div class="b" style="left:1088.15px;top:377.2px;width:398.75px;height:457.6px;border-radius:12px;background:#fff;border:1px solid #e8e8ec;box-sizing:border-box;box-shadow:0 25px 50px -12px rgba(0,0,0,0.2);overflow:hidden;"><div style="position:absolute;left:0;top:0;width:100%;height:59.7px;background:linear-gradient(90deg,#0567ca,#0553a8);"></div><div style="position:absolute;left:0;top:59.7px;width:100%;height:302.6px;background:#f8f9fa;"></div><div style="position:absolute;left:0;top:362.3px;width:100%;height:1px;background:#e5e7eb;"></div></div>
<div class="t" style="left:1105.40px;top:393.15px;font-size:14px;line-height:14px;color:#ffffff;font-weight:700;letter-spacing:-0.3px;">Polly</div>
<div class="t" style="left:1105.40px;top:412.34px;font-size:12px;line-height:12px;color:rgba(255,255,255,0.78);font-weight:400;letter-spacing:0.3px;">Your AI assistant</div>
<svg class="ic" style="left:1320.80px;top:400.00px;width:16px;height:16px;" viewBox="0 0 24 24" fill="none" stroke="#ffffff" stroke-width="2" stroke-linecap="round" stroke-linejoin="round"><path d="M15 6v12a3 3 0 1 0 3-3H6a3 3 0 1 0 3 3V6a3 3 0 1 0-3 3h12a3 3 0 1 0-3-3"/></svg>
<svg class="ic" style="left:1352.50px;top:400.00px;width:16px;height:16px;" viewBox="0 0 24 24" fill="none" stroke="#ffffff" stroke-width="2" stroke-linecap="round" stroke-linejoin="round"><path d="M11 4.702a.705.705 0 0 0-1.203-.498L6.413 7.587A1.4 1.4 0 0 1 5.416 8H3a1 1 0 0 0-1 1v6a1 1 0 0 0 1 1h2.416a1.4 1.4 0 0 1 .997.413l3.383 3.384A.705.705 0 0 0 11 19.298z"/><path d="M16 9a5 5 0 0 1 0 6"/><path d="M19.364 18.364a9 9 0 0 0 0-12.728"/></svg>
<svg class="ic" style="left:1384.50px;top:400.00px;width:16px;height:16px;" viewBox="0 0 24 24" fill="none" stroke="#ffffff" stroke-width="2" stroke-linecap="round" stroke-linejoin="round"><path d="M3 6h18"/><path d="M19 6v14a2 2 0 0 1-2 2H7a2 2 0 0 1-2-2V6"/><path d="M8 6V4a2 2 0 0 1 2-2h4a2 2 0 0 1 2 2v2"/><line x1="10" x2="10" y1="11" y2="17"/><line x1="14" x2="14" y1="11" y2="17"/></svg>
<svg class="ic" style="left:1416.50px;top:400.00px;width:16px;height:16px;" viewBox="0 0 24 24" fill="none" stroke="#ffffff" stroke-width="2" stroke-linecap="round" stroke-linejoin="round"><path d="M5 12h14"/></svg>
<svg class="ic" style="left:1448.80px;top:400.00px;width:16px;height:16px;" viewBox="0 0 24 24" fill="none" stroke="#ffffff" stroke-width="2" stroke-linecap="round" stroke-linejoin="round"><path d="M18 6 6 18"/><path d="m6 6 12 12"/></svg>
<div class="b" style="left:1251.00px;top:454.00px;width:220.00px;height:44.10px;background:#0566c9;border-radius:10px 0 10px 10px;"></div>
<div class="t" style="left:1263.40px;top:469.65px;font-size:14px;line-height:14px;color:#ffffff;font-weight:400;letter-spacing:0.2px;">Show me hot leads from today</div>
<svg class="ic" style="left:1114px;top:519px;width:14px;height:21px" viewBox="0 0 14 21"><path d="M4.6 5.5 4.9 2.6 6.3 4 7.6 2.5 8.6 3.6 9.2 5.3z" fill="#9ea8b6"/><path d="M7 5C9.6 5 11.3 8 11.3 12C11.3 15.8 10 18.2 8.8 19.5H6.2C4.3 18 2.7 15.6 2.7 12C2.7 8 4.4 5 7 5Z" fill="#22a652"/><circle cx="8.4" cy="6.6" r="1.15" fill="#fff"/><circle cx="8.6" cy="6.6" r="0.55" fill="#111"/><path d="M10.2 7.2 12.3 8.1 10.6 9.6z" fill="#e46f1c"/><circle cx="4.4" cy="11" r="0.35" fill="#0a3f8c"/><circle cx="5.2" cy="13.2" r="0.35" fill="#0a3f8c"/><circle cx="7.3" cy="17.2" r="0.35" fill="#0a3f8c"/></svg>
<div class="b" style="left:1145.40px;top:513.80px;width:325.00px;height:131.65px;background:#fff;border:1px solid #e5e7eb;border-radius:8px;box-sizing:border-box;"></div>
<div class="t" style="left:1158.50px;top:530.66px;font-size:16px;line-height:16px;color:#111827;font-weight:400;letter-spacing:0.19px;">I've set up a filter for you to view today's</div>
<div class="t" style="left:1158.50px;top:554.66px;font-size:16px;line-height:16px;color:#111827;font-weight:400;letter-spacing:0.19px;">hot leads. You can <span style="color:#0b66cf">go to the prospects</span></div>
<div class="t" style="left:1158.50px;top:578.76px;font-size:16px;line-height:16px;color:#111827;font-weight:400;letter-spacing:0.19px;"><span style="color:#0b66cf">page with these filters applied</span>.</div>
<svg class="ic" style="left:1166.00px;top:613.00px;width:14px;height:14px;" viewBox="0 0 24 24" fill="none" stroke="#0b66cf" stroke-width="2" stroke-linecap="round" stroke-linejoin="round"><path d="M11 4.702a.705.705 0 0 0-1.203-.498L6.413 7.587A1.4 1.4 0 0 1 5.416 8H3a1 1 0 0 0-1 1v6a1 1 0 0 0 1 1h2.416a1.4 1.4 0 0 1 .997.413l3.383 3.384A.705.705 0 0 0 11 19.298z"/><path d="M16 9a5 5 0 0 1 0 6"/><path d="M19.364 18.364a9 9 0 0 0 0-12.728"/></svg>
<div class="t" style="left:1186.60px;top:614.22px;font-size:12.5px;line-height:12.5px;color:#0b66cf;font-weight:400;letter-spacing:-0.05px;-webkit-text-stroke:0.2px #0b66cf;">Listen</div>
<div class="b" style="left:1237.50px;top:614.70px;width:1.30px;height:13.60px;background:#d1d5db;"></div>
<svg class="ic" style="left:1254.10px;top:613.10px;width:14px;height:14px;" viewBox="0 0 24 24" fill="none" stroke="#9ca3af" stroke-width="1.8" stroke-linecap="round" stroke-linejoin="round"><path d="M7 10v12"/><path d="M15 5.88 14 10h5.83a2 2 0 0 1 1.92 2.56l-2.33 8A2 2 0 0 1 17.5 22H4a2 2 0 0 1-2-2v-8a2 2 0 0 1 2-2h2.76a2 2 0 0 0 1.79-1.11L12 2a3.13 3.13 0 0 1 3 3.88Z"/></svg>
<svg class="ic" style="left:1284.10px;top:612.80px;width:14px;height:14px;" viewBox="0 0 24 24" fill="none" stroke="#9ca3af" stroke-width="1.8" stroke-linecap="round" stroke-linejoin="round"><path d="M17 14V2"/><path d="M9 18.12 10 14H4.17a2 2 0 0 1-1.92-2.56l2.33-8A2 2 0 0 1 6.5 2H20a2 2 0 0 1 2 2v8a2 2 0 0 1-2 2h-2.76a2 2 0 0 0-1.79 1.11L12 22a3.13 3.13 0 0 1-3-3.88Z"/></svg>
<svg class="ic" style="left:1148.50px;top:656.00px;width:12.5px;height:12.5px;" viewBox="0 0 24 24" fill="none" stroke="#6b7280" stroke-width="2" stroke-linecap="round" stroke-linejoin="round"><path d="M14.7 6.3a1 1 0 0 0 0 1.4l1.6 1.6a1 1 0 0 0 1.4 0l3.77-3.77a6 6 0 0 1-7.94 7.94l-6.91 6.91a2.12 2.12 0 0 1-3-3l6.91-6.91a6 6 0 0 1 7.94-7.94l-3.76 3.76z"/></svg>
<div class="t" style="left:1165.00px;top:656.34px;font-size:12px;line-height:12px;color:#6b7280;font-weight:400;letter-spacing:0.3px;">2 tools used</div>
<svg class="ic" style="left:1239.50px;top:656.90px;width:10px;height:10px;" viewBox="0 0 24 24" fill="none" stroke="#6b7280" stroke-width="2" stroke-linecap="round" stroke-linejoin="round"><path d="m6 9 6 6 6-6"/></svg>
<div class="b" style="left:1145.40px;top:678.50px;width:202.00px;height:28.80px;border:1px solid #e5e7eb;border-radius:8px;box-sizing:border-box;"></div>
<svg class="ic" style="left:1157.30px;top:684.80px;width:15px;height:15px;" viewBox="0 0 24 24" fill="none" stroke="#0b66cf" stroke-width="2" stroke-linecap="round" stroke-linejoin="round"><path d="M12 6H6a2 2 0 0 0-2 2v10a2 2 0 0 0 2 2h10a2 2 0 0 0 2-2v-6"/><path d="M11 13l9-9"/><path d="M15 4h5v5"/></svg>
<div class="t" style="left:1178.40px;top:686.30px;font-size:13px;line-height:13px;color:#0b66cf;font-weight:400;letter-spacing:0.08px;-webkit-text-stroke:0.4px #0b66cf;">Go to prospects with filters</div>
<div class="b" style="left:1101.40px;top:753.25px;width:333.00px;height:37.40px;background:#fff;border:1px solid #d4d6dc;border-radius:8px;box-sizing:border-box;box-shadow:0 0 0 2px #9fbef7;"></div>
<div class="t" style="left:1114.80px;top:765.45px;font-size:14px;line-height:14px;color:#6b7280;font-weight:400;letter-spacing:0.1px;">Ask Polly anything...</div>
<div class="b" style="left:1114.30px;top:764.00px;width:0.80px;height:16.60px;background:#111827;"></div>
<div class="b" style="left:1443.00px;top:756.00px;width:32.00px;height:32.00px;background:#85aee8;border-radius:8px;"></div>
<svg class="ic" style="left:1450.50px;top:763.50px;width:17px;height:17px;" viewBox="0 0 24 24" fill="none" stroke="#ffffff" stroke-width="2" stroke-linecap="round" stroke-linejoin="round"><path d="M14.536 21.686a.5.5 0 0 0 .937-.024l6.5-19a.496.496 0 0 0-.635-.635l-19 6.5a.5.5 0 0 0-.024.937l7.93 3.18a2 2 0 0 1 1.112 1.11z"/><path d="m21.854 2.147-10.94 10.939"/></svg>
<div class="t" style="left:1199.40px;top:810.84px;font-size:12px;line-height:12px;color:#6b7280;font-weight:400;letter-spacing:0.3px;">Press</div>
<div class="b" style="left:1233.70px;top:808.00px;width:22.00px;height:17.70px;background:#f3f4f6;border-radius:4px;"></div>
<div class="t" style="left:1236.50px;top:811.69px;font-size:11px;line-height:11px;color:#6b7280;font-weight:400;letter-spacing:0px;">⌘K</div>
<div class="t" style="left:1259.50px;top:810.84px;font-size:12px;line-height:12px;color:#6b7280;font-weight:400;letter-spacing:0.43px;">for command palette</div>
</body></html>
